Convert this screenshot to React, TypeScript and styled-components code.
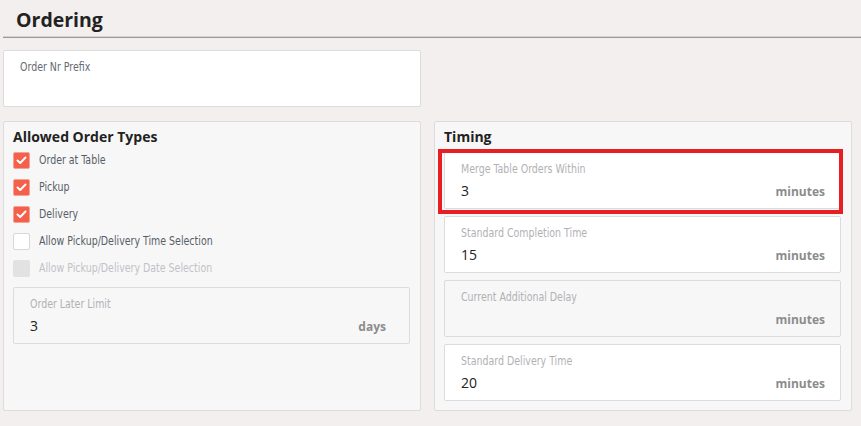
import React from "react";
import styled, { createGlobalStyle } from "styled-components";

const Global = createGlobalStyle`
  html, body { margin: 0; padding: 0; background: #f3efee; }
  body { font-family: "Open Sans", "Liberation Sans", sans-serif; }
  * { box-sizing: border-box; }
`;

const Page = styled.div`
  padding-left: 3px;
  width: 861px;
  height: 426px;
`;

const Header = styled.div`
  height: 38px;
  padding: 6px 0 0 13px;
  border-bottom: 1px solid #9a9a9a;
  box-shadow: inset 0 -1px 0 #d4d2d2;
`;

const Title = styled.h1`
  margin: 0;
  font-family: "Open Sans", sans-serif;
  font-weight: 700;
  font-size: 19.5px;
  line-height: 27px;
  color: #222;
`;

const Content = styled.div`
  padding: 12px 9px 0 0;
  display: grid;
  grid-template-columns: 418px 418px;
  column-gap: 13px;
  row-gap: 14px;
`;

const Field = styled.div<{ $bg?: string; $pr?: number }>`
  position: relative;
  height: 57px;
  background: ${(p) => p.$bg || "#fff"};
  border: 1px solid #dcdcdc;
  border-radius: 2px;
  padding: 9px ${(p) => p.$pr ?? 15}px 0 16px;
`;

const Narrow = styled.span`
  display: block;
  white-space: nowrap;
  font-family: "DejaVu Sans Condensed", "DejaVu Sans", sans-serif;
  font-size: 12.5px;
  line-height: 14px;
  height: 14px;
  transform: scaleX(0.84);
  transform-origin: left center;
`;

const FieldLabel = styled.div<{ $dark?: boolean }>`
  height: 14px;
  color: ${(p) => (p.$dark ? "#646a72" : "#b1b1b5")};
`;

const ValueRow = styled.div`
  margin-top: 4px;
  height: 20px;
  display: flex;
  align-items: center;
  justify-content: space-between;
`;

const Value = styled.span`
  font-family: "Open Sans", sans-serif;
  font-size: 14px;
  color: #222;
`;

const Unit = styled.span`
  font-family: "Open Sans", sans-serif;
  font-weight: 700;
  font-size: 12px;
  color: #8c8c8c;
  margin-left: auto;
  margin-top: 2px;
`;

const Panel = styled.section`
  height: 290px;
  background: #f7f7f7;
  border: 1px solid #dcdcdc;
  border-radius: 2px;
  padding: 5px 10px 0 9px;
  display: flex;
  flex-direction: column;
`;

const PanelTitle = styled.h2`
  margin: 0 0 5px;
  font-family: "Open Sans", sans-serif;
  font-weight: 700;
  font-size: 14px;
  line-height: 20px;
  color: #222;
`;

const Stack = styled.div<{ $gap: number }>`
  display: flex;
  flex-direction: column;
  gap: ${(p) => p.$gap}px;
`;

const CheckRow = styled.label`
  display: flex;
  align-items: center;
  gap: 9px;
  height: 17px;
`;

const Box = styled.span<{ $state: "on" | "off" | "disabled" }>`
  flex: none;
  width: 17px;
  height: 17px;
  border-radius: 2px;
  display: flex;
  align-items: center;
  justify-content: center;
  background: ${(p) =>
    p.$state === "on" ? "#f6604a" : p.$state === "off" ? "#fff" : "#e2e2e3"};
  border: 1px solid
    ${(p) => (p.$state === "on" ? "#f1a397" : p.$state === "off" ? "#d8d8d8" : "#e2e2e3")};
`;

const CheckLabel = styled.span<{ $disabled?: boolean }>`
  height: 14px;
  margin-top: -1px;
  color: ${(p) => (p.$disabled ? "#c2c2c6" : "#585e67")};
`;

const Highlight = styled.div`
  position: absolute;
  left: -7px;
  top: -4px;
  right: -3px;
  bottom: -6px;
  border: 4px solid #e81e25;
  pointer-events: none;
`;

const Check = () => (
  <svg width="11" height="9" viewBox="0 0 11 9">
    <polyline points="1.5,4.5 4.2,7 9.5,1.5" fill="none" stroke="#fff" strokeWidth="2" strokeLinecap="round" strokeLinejoin="round" />
  </svg>
);

type CB = { label: string; state: "on" | "off" | "disabled" };
const checks: CB[] = [
  { label: "Order at Table", state: "on" },
  { label: "Pickup", state: "on" },
  { label: "Delivery", state: "on" },
  { label: "Allow Pickup/Delivery Time Selection", state: "off" },
  { label: "Allow Pickup/Delivery Date Selection", state: "disabled" },
];

type TF = { label: string; value: string; bg?: string; highlight?: boolean };
const timing: TF[] = [
  { label: "Merge Table Orders Within", value: "3", highlight: true },
  { label: "Standard Completion Time", value: "15" },
  { label: "Current Additional Delay", value: "", bg: "#f7f7f7" },
  { label: "Standard Delivery Time", value: "20" },
];

export default function App() {
  return (
    <Page>
      <Global />
      <Header>
        <Title>Ordering</Title>
      </Header>
      <Content>
        <Field>
          <FieldLabel $dark>
            <Narrow>Order Nr Prefix</Narrow>
          </FieldLabel>
        </Field>
        <div />
        <Panel>
          <PanelTitle>Allowed Order Types</PanelTitle>
          <Stack $gap={10}>
            {checks.map((c) => (
              <CheckRow key={c.label}>
                <Box $state={c.state}>{c.state === "on" && <Check />}</Box>
                <CheckLabel $disabled={c.state === "disabled"}>
                  <Narrow>{c.label}</Narrow>
                </CheckLabel>
              </CheckRow>
            ))}
            <Field $bg="#f7f7f7" $pr={23}>
              <FieldLabel>
                <Narrow>Order Later Limit</Narrow>
              </FieldLabel>
              <ValueRow>
                <Value>3</Value>
                <Unit>days</Unit>
              </ValueRow>
            </Field>
          </Stack>
        </Panel>
        <Panel>
          <PanelTitle>Timing</PanelTitle>
          <Stack $gap={7}>
            {timing.map((t) => (
              <Field key={t.label} $bg={t.bg}>
                <FieldLabel>
                  <Narrow>{t.label}</Narrow>
                </FieldLabel>
                <ValueRow>
                  <Value>{t.value}</Value>
                  <Unit>minutes</Unit>
                </ValueRow>
                {t.highlight && <Highlight />}
              </Field>
            ))}
          </Stack>
        </Panel>
      </Content>
    </Page>
  );
}
